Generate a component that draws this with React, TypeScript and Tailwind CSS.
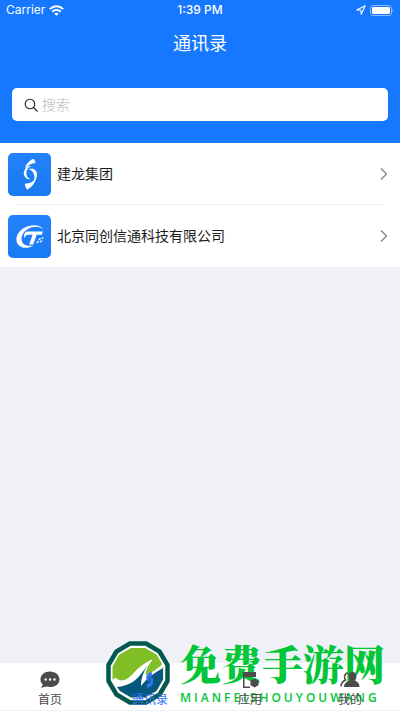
import React from "react";

const FONT = "font-['Inter','Noto_Sans_CJK_SC',sans-serif]";

function Wifi() {
  return (
    <svg viewBox="0 0 15 11" className="h-[11px] w-[15px]" fill="none" stroke="#fff" strokeWidth="1.9">
      <path d="M.8 4.1C4.6.3 10.4.3 14.2 4.1" />
      <path d="M3.2 6.7c2.5-2.4 6.1-2.4 8.6 0" />
      <path d="M7.5 11 5.3 8.6c1.2-1.1 3.2-1.1 4.4 0z" fill="#fff" stroke="none" />
    </svg>
  );
}

function StatusBar() {
  return (
    <div className="grid h-5 grid-cols-3 items-center px-1.5 text-[12px] leading-5">
      <div className="flex items-center gap-1">
        <span>Carrier</span>
        <Wifi />
      </div>
      <span className="text-center font-medium">1:39 PM</span>
      <div className="flex items-center justify-end gap-1">
        <svg viewBox="0 0 10 10" className="size-[10px]" fill="none" stroke="#fff" strokeWidth="1.1" strokeLinejoin="round">
          <path d="M9.2.8.8 4.9l4 .3.4 4z" />
        </svg>
        <svg viewBox="0 0 24 11" className="h-[11px] w-6">
          <rect x=".5" y=".5" width="21" height="10" rx="2.6" fill="none" stroke="#fff" strokeOpacity=".5" />
          <rect x="2" y="2" width="18" height="7" rx="1.4" fill="#fff" />
          <path d="M22.6 3.8c1.2.4 1.2 3 0 3.4z" fill="#fff" fillOpacity=".5" />
        </svg>
      </div>
    </div>
  );
}

function DragonLogo() {
  return (
    <svg viewBox="0 0 43 43" className="size-full" fill="#fff">
      <path d="M25.500 5.700c-4.500 2-8.200 6-8.200 9.800 3.200-3.600 6-5.200 10.200-5.500-.2-1.600-.9-3.200-2-4.300z" />
      <path d="M18.500 14.500c-2 2-3 4.200-2.700 6.600.4 3 3 5.300 6.700 5.400-3.200-2-4.600-4.600-4.100-7.600.4-2.600 2.300-4.700 4.900-5.900-1.800 0-3.400.4-4.800 1.500z" />
      <path d="M21 16.200c4-1.400 7.600.8 8 4.600.4 3-1 5.800-3.700 8 1-2.200 1.400-4.400.9-6.600-.6-2.800-2.400-4.900-5.200-6z" />
      <path d="M28.500 25c-1.500 5-4.500 9-9.300 11.700-1.400-1.800-2.200-3.800-2.400-6 5-.2 8.700-2 11.700-5.700z" />
    </svg>
  );
}

function TcLogo() {
  return (
    <svg viewBox="0 0 43 43" className="size-full" fill="#fff">
      <path d="M35 14.300C32 8.500 21 9 14 14.300 6 20.500 7 30 14 32.300c4 1.200 8 .2 11.500-1.800-4.500.7-8.300.2-10.300-2-3.700-4.400-1-11.300 5-14.700 5-2.800 11-2.700 14.800.5z" />
      <path d="M18.500 16.500H35l-1.300 3.300h-5l-3.500 9.700h-4.100l3.500-9.700h-4c-2.500 0-3.800 1.500-4.200 3.700-1-3.500-.2-5.700 2.100-7z" />
      <path d="m31 23.500 2-.8-.8 2-2 .8zm3-.9 1.600-.6-.6 1.600-1.600.6zm-5 4 2-.8-.8 2-2 .8zm3.400-.8 2-.8-.8 2-2 .8z" />
    </svg>
  );
}

function Company({ name, logo, divided }: { name: string; logo: React.ReactNode; divided?: boolean }) {
  return (
    <li className="relative">
      <button className="flex h-[62px] w-full items-center pr-3 pl-2 text-left">
        <span className="size-[43px] shrink-0 overflow-hidden rounded-[5px] bg-gradient-to-b from-[#2381fb] to-[#187bf4]">{logo}</span>
        <span className="ml-1.5 flex-1 text-[14px] leading-5 text-[#1c1c1c]">{name}</span>
        <svg viewBox="0 0 8 14" className="h-[14px] w-2" fill="none" stroke="#808080" strokeWidth="1.2">
          <path d="m1 1.500 5.500 5.500L1 12.500" />
        </svg>
      </button>
      {divided && <div className="absolute right-4 bottom-0 left-4 h-px bg-[#f1f2f5]" />}
    </li>
  );
}

function Tab({ label, active, children }: { label: string; active?: boolean; children: React.ReactNode }) {
  return (
    <button className={active ? "flex flex-col items-center gap-0.5 pt-[7px] text-[#3273f6]" : "flex flex-col items-center gap-0.5 pt-[7px] text-[#4b4b4e]"}>
      <svg viewBox="0 0 20 20" className="size-5" fill="currentColor">{children}</svg>
      <span className="text-[12px] leading-4">{label}</span>
    </button>
  );
}

function Watermark() {
  return (
    <div className="pointer-events-none absolute bottom-[5px] left-[104px] flex items-center gap-2 text-[#00c638]">
      <svg viewBox="0 0 68 66" className="h-[66px] w-[68px] shrink-0" strokeLinejoin="round">
        <path
          d="M26 3.500H42L55.500 11.500 63.500 25V41L55.500 54.500 42 62.500H26L12.500 54.500 4.500 41V25L12.500 11.500Z"
          fill="#fff"
          stroke="#03594f"
          strokeWidth="4.500"
        />
        <path d="M27 8.500H41L52.500 15 59 26.500V39.500L52.500 51 41 57.500H27L15.500 51 9 39.500V26.500L15.500 15Z" fill="#80bf28" stroke="#80bf28" />
        <path
          d="M9 40c1-2 4-2 5 0 6 3 12-2 17-8 5-5 10-9 17-12-5 6-7 11-7 16 7-3 13-7 18-12v15.500L52.500 51 41 57.500H27L15.500 51z"
          fill="#fff"
          stroke="#fff"
        />
        <path d="M13 47c11-1 19-6 24-13l7-9c-5 7-7 14-7 21 5-7 13-13 22-18v11.500L52.500 51 41 57.500H27L16 51z" fill="#06577c" />
      </svg>
      <div className="flex flex-col items-start gap-1 whitespace-nowrap">
        <span className="font-['Noto_Serif_CJK_SC','Noto_Sans_CJK_SC',serif] text-[41px] leading-[46px] font-black">免费手游网</span>
        <span className="font-['Open_Sans',sans-serif] text-[12px] leading-4 font-semibold tracking-[3px]">MIANFEISHOUYOUWANG</span>
      </div>
    </div>
  );
}

export default function App() {
  return (
    <div className={`relative flex min-h-screen flex-col bg-[#eff1f6] ${FONT}`}>
      <header className="bg-[#1677ff] pb-[22px] text-white">
        <StatusBar />
        <h1 className="pt-2.5 text-center text-[18px] leading-7 font-normal">通讯录</h1>
        <label className="mx-3 mt-[30px] flex h-[33px] items-center gap-1 rounded-[5px] bg-white px-3">
          <svg viewBox="0 0 14 14" className="size-[14px] shrink-0" fill="none" stroke="#222" strokeWidth="1.1">
            <circle cx="6" cy="6" r="4.8" />
            <path d="m9.500 9.500 4 4" />
          </svg>
          <input type="search" aria-label="搜索" placeholder="搜索" className="min-w-0 flex-1 bg-transparent text-[14px] leading-5 font-light text-black outline-none placeholder:text-[#b8b8bc]" />
        </label>
      </header>
      <main className="flex-1">
        <ul className="bg-white">
          <Company name="建龙集团" logo={<DragonLogo />} divided />
          <Company name="北京同创信通科技有限公司" logo={<TcLogo />} />
        </ul>
      </main>
      <div className="h-12 bg-white" />
      <Watermark />
      <nav className="absolute inset-x-0 bottom-0 grid h-12 grid-cols-4 border-b border-[#eff1f6]">
        <Tab label="首页">
          <path
            fillRule="evenodd"
            d="M10 1.500C4.600 1.500.5 5 .5 9.400c0 2.100 1 3.900 2.500 5.200L.9 17.800l6-1.200c1 .3 2 .4 3.100.4 5.400 0 9.500-3.300 9.500-7.600S15.400 1.500 10 1.500zM5.700 8.300a1.200 1.200 0 1 1 0 2.400 1.200 1.200 0 0 1 0-2.400zm4.400 0a1.200 1.200 0 1 1 0 2.400 1.200 1.200 0 0 1 0-2.400zm4.400 0a1.200 1.200 0 1 1 0 2.400 1.200 1.200 0 0 1 0-2.400z"
          />
        </Tab>
        <Tab label="通讯录" active>
          <path d="M11.500 1.500C7.500 3 5.800 6 6.300 9c.4 1.600 1.700 2.400 3.200 2.300-1-2.600-.3-4.600 2.500-6zM10.500 7c2.600.6 3.400 2.400 2.300 5.200.6 2.800-1.600 5-5.600 5.300l-.8-3c3-.2 4.900-2.500 4.100-7.500z" />
        </Tab>
        <Tab label="应用">
          <path d="M3 2h13v5H4.500v9.500H10V18H3z" />
          <path d="m14.500 8.500 4 2.200v4.600l-4 2.200-4-2.200v-4.600z" />
        </Tab>
        <Tab label="我的">
          <path d="M12.500 2C8 2 7.500 7 10 10.500c-4 1.300-6 3-6 6.500h15.500c0-3.500-1.500-5-4.500-6.500C17.500 7 17 2 12.500 2z" />
          <path d="M8 3C4 3.500 3.800 7.500 5.500 10 2.500 11.500 1 13.500 1 16.500" fill="none" stroke="currentColor" strokeWidth="1.5" />
        </Tab>
      </nav>
    </div>
  );
}
